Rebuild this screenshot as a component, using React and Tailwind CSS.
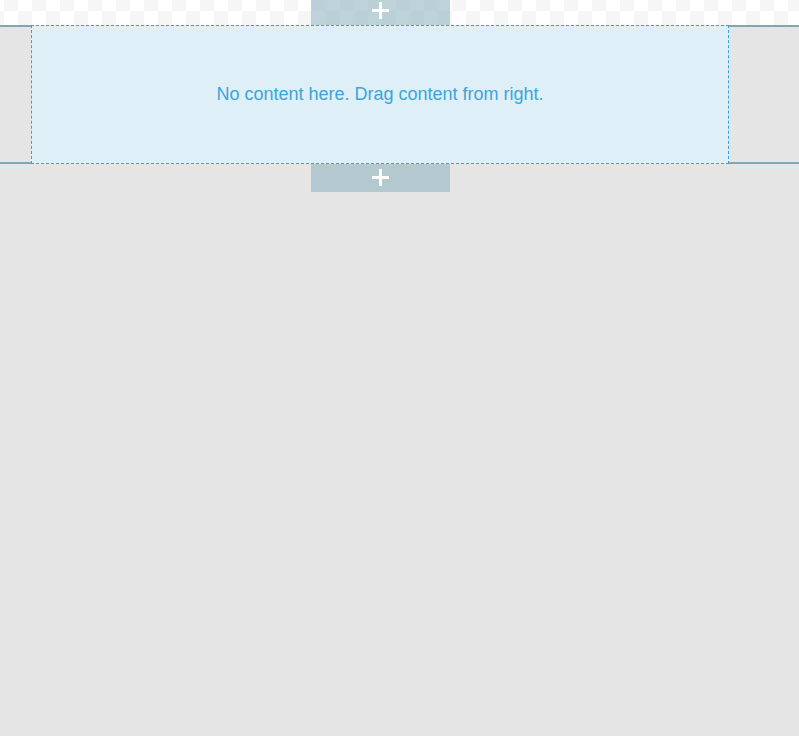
const Plus = () => (
  <svg width="17" height="17" viewBox="0 0 17 17" className="block">
    <rect x="7" y="0" width="3" height="17" fill="#ffffff" />
    <rect x="0" y="7" width="17" height="3" fill="#ffffff" />
  </svg>
);

export default function App() {
  return (
    <div className="w-[799px] h-[736px] bg-[#e5e5e5] font-['Liberation_Sans',Arial,sans-serif] overflow-hidden">
      {/* top drop zone */}
      <div className="h-[25px] bg-white bg-[conic-gradient(#f6f6f6_25%,#ffffff_0_50%,#f6f6f6_0_75%,#ffffff_0)] bg-[length:28px_28px] bg-[position:18px_-3px]">
        <button className="ml-[311px] w-[139px] h-[25px] bg-[rgba(148,183,193,0.62)] flex justify-center pt-[2px]">
          <Plus />
        </button>
      </div>

      {/* row */}
      <div className="flex h-[139px]">
        <div className="w-[31px] border-y-2 border-[#7ba9b9]" />
        <div className="w-[698px] border border-dashed border-[#33a2dc] bg-[#dfeff7] flex items-center justify-center">
          <span className="text-[18px] text-[#39a5db]">No content here. Drag content from right.</span>
        </div>
        <div className="flex-1 border-y-2 border-[#7ba9b9]" />
      </div>

      {/* bottom drop zone */}
      <button className="ml-[311px] w-[139px] h-[28px] bg-[#b3c9cf] flex items-center justify-center pb-[2px]">
        <Plus />
      </button>
    </div>
  );
}
